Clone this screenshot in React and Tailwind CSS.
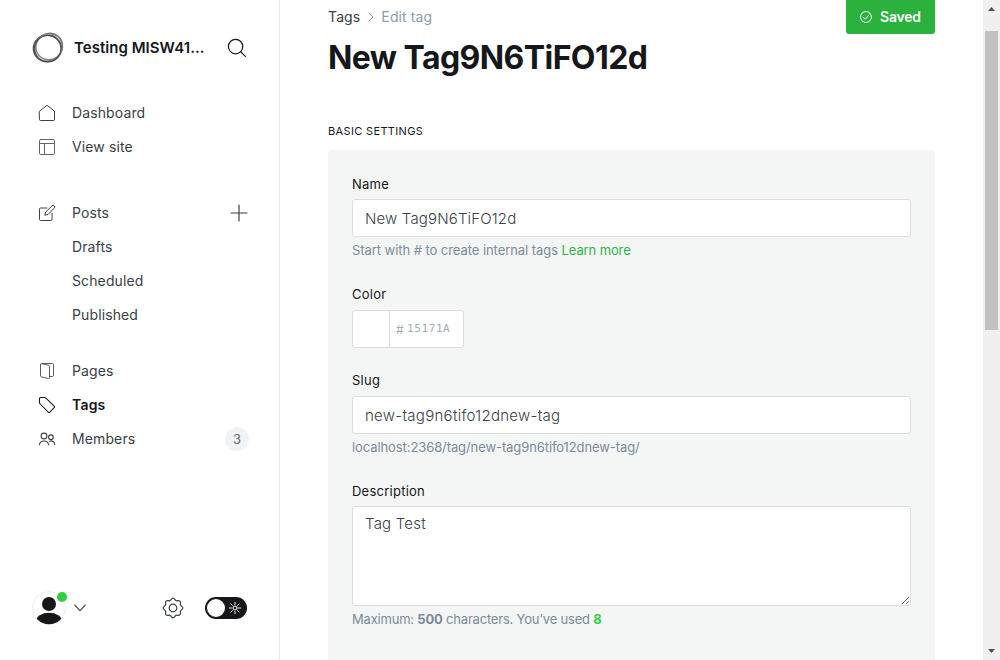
import React from "react";

const line = { fill: "none", stroke: "currentColor", strokeLinecap: "round", strokeLinejoin: "round" };

const SiteLogo = () => (
  <svg width="32" height="32" viewBox="0 0 32 32" fill="none" className="shrink-0">
    <ellipse cx="15.4" cy="16.4" rx="14" ry="13.4" stroke="#555" strokeWidth="1.5" />
    <ellipse cx="17.2" cy="14.8" rx="13.4" ry="12.8" transform="rotate(-25 17.2 14.8)" stroke="#888" strokeWidth="1.5" />
    <ellipse cx="16.6" cy="15.2" rx="14.6" ry="13" transform="rotate(-50 16.6 15.2)" stroke="#777" strokeWidth="1.3" />
    <ellipse cx="15.6" cy="16.7" rx="13.4" ry="13.2" stroke="#444" strokeWidth="1" />
  </svg>
);

const SearchIcon = () => (
  <svg width="20" height="20" viewBox="0 0 20 20" {...line} strokeWidth="1.2">
    <circle cx="8.6" cy="8.6" r="7.2" />
    <path d="M13.8 13.8l4.6 4.6" />
  </svg>
);
const HomeIcon = () => (
  <svg width="18" height="18" viewBox="0 0 18 18" {...line} strokeWidth="1">
    <path d="M1.5 7.2L9 1.3l7.5 5.9v8.5a.8.8 0 0 1-.8.8H2.3a.8.8 0 0 1-.8-.8z" />
  </svg>
);
const SiteIcon = () => (
  <svg width="18" height="18" viewBox="0 0 18 18" {...line} strokeWidth="1" className="opacity-80">
    <rect x="1.5" y="1.5" width="15" height="15" rx="1.3" />
    <path d="M1.5 5.5h15M6.5 5.5v11" />
  </svg>
);
const PostsIcon = () => (
  <svg width="18" height="18" viewBox="0 0 18 18" {...line} strokeWidth="1">
    <path d="M8.8 4H2.6a1.1 1.1 0 0 0-1.1 1.1v10.3a1.1 1.1 0 0 0 1.1 1.1h10.3a1.1 1.1 0 0 0 1.1-1.1V9.2" />
    <path d="M9.8 10.5l-3 .7.7-3 6.5-6.4a1.6 1.6 0 0 1 2.3 2.3z" />
  </svg>
);
const PagesIcon = () => (
  <svg width="18" height="18" viewBox="0 0 18 18" {...line} strokeWidth="1" className="opacity-85">
    <path d="M2.5 2.6v11.2a1 1 0 0 0 .8 1l7.2 1.7a.8.8 0 0 0 1-.8V4.3a1 1 0 0 0-.8-1L3.8 1.7a1 1 0 0 0-1.3.9z" />
    <path d="M3.6 1.5h10.8a1.1 1.1 0 0 1 1.1 1.1v10.8a1.1 1.1 0 0 1-1.1 1.1h-2.6" />
  </svg>
);
const TagIcon = () => (
  <svg width="18" height="18" viewBox="0 0 18 18" {...line} strokeWidth="1.05">
    <path d="M1.5 2.5v4.2c0 .3.1.6.3.8l8.4 8.6a1.1 1.1 0 0 0 1.6 0l4.4-4.4a1.1 1.1 0 0 0 0-1.6L7.6 1.8a1.1 1.1 0 0 0-.8-.3H2.5a1 1 0 0 0-1 1z" />
  </svg>
);
const MembersIcon = () => (
  <svg width="18" height="18" viewBox="0 0 18 18" {...line} strokeWidth="1.1">
    <circle cx="6" cy="6" r="2.9" />
    <path d="M1.3 14.8a4.8 4.8 0 0 1 9.4 0" />
    <circle cx="12.9" cy="7.2" r="2.3" />
    <path d="M11.6 11.2a3.7 3.7 0 0 1 5.1 3.4" />
  </svg>
);
const GearIcon = () => (
  <svg width="22" height="22" viewBox="-11 -11 22 22" {...line} strokeWidth="1.2">
    <circle r="3.8" />
    <path d="M-2 -8.4Q0 -11.2 2 -8.4Q2.9 -6.8 4.5 -7.4Q7.9 -7.9 7.4 -4.5Q6.8 -2.9 8.4 -2Q11.2 0 8.4 2Q6.8 2.9 7.4 4.5Q7.9 7.9 4.5 7.4Q2.9 6.8 2 8.4Q0 11.2 -2 8.4Q-2.9 6.8 -4.5 7.4Q-7.9 7.9 -7.4 4.5Q-6.8 2.9 -8.4 2Q-11.2 0 -8.4 -2Q-6.8 -2.9 -7.4 -4.5Q-7.9 -7.9 -4.5 -7.4Q-2.9 -6.8 -2 -8.4z" />
  </svg>
);
const SunIcon = () => (
  <svg width="12" height="12" viewBox="-6 -6 12 12" {...line} strokeWidth="1">
    <circle r="2" />
    <path d="M0-5.6v2M0 3.6v2M-5.6 0h2M3.6 0h2M-4-4l1.4 1.4M2.6 2.6l1.4 1.4M-4 4l1.4-1.4M2.6-2.6l1.4-1.4" />
  </svg>
);

function NavItem({ icon, label, active, children }) {
  return (
    <a className={`flex h-[34px] items-center pr-8 pl-[38px] text-sm ${active ? "font-semibold tracking-[0.2px] text-[#15171a]" : "tracking-[0.12px] text-[#394047]"}`}>
      <span className="w-[34px] shrink-0">{icon}</span>
      <span className="flex-1">{label}</span>
      {children}
    </a>
  );
}

function Sidebar() {
  return (
    <nav className="flex h-full w-[280px] shrink-0 flex-col border-r border-[#e6e9eb] bg-white">
      <div className="mt-8 flex h-8 items-center pr-8 pl-8 text-[#15171a]">
        <SiteLogo />
        <div className="ml-2.5 w-[153px] text-[15px] font-semibold tracking-[0.03px]">Testing MISW41...</div>
        <SearchIcon />
      </div>
      <div className="mt-8">
        <NavItem icon={<HomeIcon />} label="Dashboard" />
        <NavItem icon={<SiteIcon />} label="View site" />
      </div>
      <div className="mt-8">
        <NavItem icon={<PostsIcon />} label="Posts">
          <svg width="18" height="18" viewBox="0 0 18 18" {...line} strokeWidth="1.2" className="-mr-px"><path d="M9 1v16M1 9h16" /></svg>
        </NavItem>
        <NavItem label="Drafts" />
        <NavItem label="Scheduled" />
        <NavItem label="Published" />
      </div>
      <div className="mt-[22px]">
        <NavItem icon={<PagesIcon />} label="Pages" />
        <NavItem icon={<TagIcon />} label="Tags" active />
        <NavItem icon={<MembersIcon />} label="Members">
          <span className="-mr-0.5 flex h-6 w-6 items-center justify-center rounded-full bg-[#f1f3f4] text-[13px] tracking-normal text-[#626d79]">3</span>
        </NavItem>
      </div>
      <div className="mt-auto mb-[35px] flex h-[34px] items-center pr-8 pl-8">
        <div className="relative h-[34px] w-[34px]">
          <svg width="34" height="34" viewBox="0 0 34 34">
            <defs><clipPath id="face"><circle cx="17" cy="17" r="16.3" /></clipPath></defs>
            <circle cx="17" cy="17" r="16.4" fill="#fff" stroke="#e6e9eb" strokeWidth=".8" />
            <g fill="#15171a" clipPath="url(#face)">
              <circle cx="17" cy="13" r="7" />
              <ellipse cx="17" cy="30" rx="13" ry="8.2" />
            </g>
          </svg>
          <span className="absolute top-px left-[25px] h-2.5 w-2.5 rounded-full bg-[#30cf43]" />
        </div>
        <svg width="12" height="8" viewBox="0 0 12 8" {...line} strokeWidth="1.1" className="ml-2 text-[#394047]"><path d="M.8 1.2L6 6.6l5.2-5.4" /></svg>
        <div className="ml-[76px] text-[#394047]"><GearIcon /></div>
        <div className="ml-[21px] flex h-[22px] w-[42px] shrink-0 items-center justify-between rounded-full bg-[#15171a] pr-1.5 pl-0.5 text-white">
          <span className="h-[18px] w-[18px] rounded-full bg-white" />
          <SunIcon />
        </div>
      </div>
    </nav>
  );
}

const labelClass = "h-5 text-[13px] leading-5 tracking-[0.24px] text-[#15171a]";
const inputClass = "block h-[38px] w-full rounded-[3px] border border-[#dddedf] bg-white px-3 text-[15px] text-[#394047] outline-none font-light";
const hintClass = "mt-[3px] h-5 text-[13px] leading-5 text-[#7c8b9a]";

function Editor() {
  return (
    <main className="flex h-full w-[703px] shrink-0 flex-col overflow-hidden bg-white pr-12 pl-12">
      <header className="flex h-[82px] shrink-0 justify-between">
        <div>
          <div className="mt-[7px] flex h-5 items-center text-sm leading-5 tracking-[0.12px]">
            <a className="text-[#394047]">Tags</a>
            <svg width="6" height="10" viewBox="0 0 6 10" {...line} strokeWidth="1" className="mr-[7px] ml-2 text-[#8e9cac]"><path d="M.8 1l4.2 4-4.2 4" /></svg>
            <span className="text-[#8e9cac]">Edit tag</span>
          </div>
          <h1 className="mt-[11px] h-10 text-[32px] leading-10 font-bold tracking-[-0.58px] whitespace-nowrap text-[#15171a]">New Tag9N6TiFO12d</h1>
        </div>
        <button className="flex h-[34px] w-[89px] items-center rounded-b-[3px] bg-[#2ab23c] pl-3.5 text-sm font-semibold tracking-[-0.2px] text-white">
          <svg width="12" height="12" viewBox="0 0 12 12" {...line} strokeWidth="1" className="mr-2"><circle cx="6" cy="6" r="5.5" /><path d="M3.2 6.3L5.2 8.3l3.7-4.3" /></svg>
          Saved
        </button>
      </header>
      <h4 className="mt-[39px] h-5 shrink-0 text-[11px] leading-5 tracking-[0.35px] text-[#15171a] uppercase">Basic settings</h4>
      <section className="mt-[9px] h-[530px] shrink-0 rounded-[3px] bg-[#f4f6f6] px-6 pt-6">
        <div className="h-[110px]">
          <div className={labelClass}>Name</div>
          <input className={`${inputClass} mt-[5px] pt-px tracking-[0.15px]`} defaultValue="New Tag9N6TiFO12d" />
          <p className={`${hintClass} tracking-[-0.06px]`}>Start with # to create internal tags <a className="tracking-[-0.12px] text-[#30b24a]">Learn more</a></p>
        </div>
        <div className="h-[86px]">
          <div className={labelClass}>Color</div>
          <div className="mt-1.5 flex h-[38px] w-28 rounded-[3px] border border-[#dddedf] bg-white">
            <div className="w-[37px] border-r border-[#dddedf]" />
            <div className="flex items-center pl-1.5 text-[#a3adb8]">
              <span className="mt-0.5 w-[11px] text-xs">#</span>
              <span className="mt-px font-['DejaVu_Sans_Mono',monospace] text-[11px] tracking-[0.6px]">15171A</span>
            </div>
          </div>
        </div>
        <div className="h-[111px]">
          <div className={labelClass}>Slug</div>
          <input className={`${inputClass} mt-1.5 tracking-[0.29px]`} defaultValue="new-tag9n6tifo12dnew-tag" />
          <p className={`${hintClass} tracking-[-0.09px]`}>localhost:2368/tag/new-tag9n6tifo12dnew-tag/</p>
        </div>
        <div>
          <div className={labelClass}>Description</div>
          <textarea className="mt-[5px] block h-[100px] w-full resize-y rounded-[3px] border border-[#dddedf] bg-white px-3 py-1.5 text-[15px] leading-[22px] font-light tracking-[0.2px] text-[#394047] outline-none" defaultValue="Tag Test" />
          <p className={`${hintClass} tracking-[-0.2px]`}>Maximum: <b>500</b> characters. You’ve used <b className="text-[#30cf43]">8</b></p>
        </div>
      </section>
    </main>
  );
}

function Scrollbar() {
  return (
    <div className="flex h-full w-[17px] shrink-0 flex-col items-center bg-[#f0f0f0] pr-px">
      <svg width="7" height="4" viewBox="0 0 7 4" fill="#505050" className="mt-[7px]"><path d="M3.5 0L7 4H0z" /></svg>
      <div className="mt-5 h-[299px] w-[13px] bg-[#c1c1c1]" />
      <svg width="7" height="4" viewBox="0 0 7 4" fill="#505050" className="mt-auto mb-[7px]"><path d="M0 0h7L3.5 4z" /></svg>
    </div>
  );
}

export default function App() {
  return (
    <div className="flex h-[660px] w-[1000px] overflow-hidden bg-white font-['Inter','Liberation_Sans',sans-serif]">
      <Sidebar />
      <Editor />
      <Scrollbar />
    </div>
  );
}
